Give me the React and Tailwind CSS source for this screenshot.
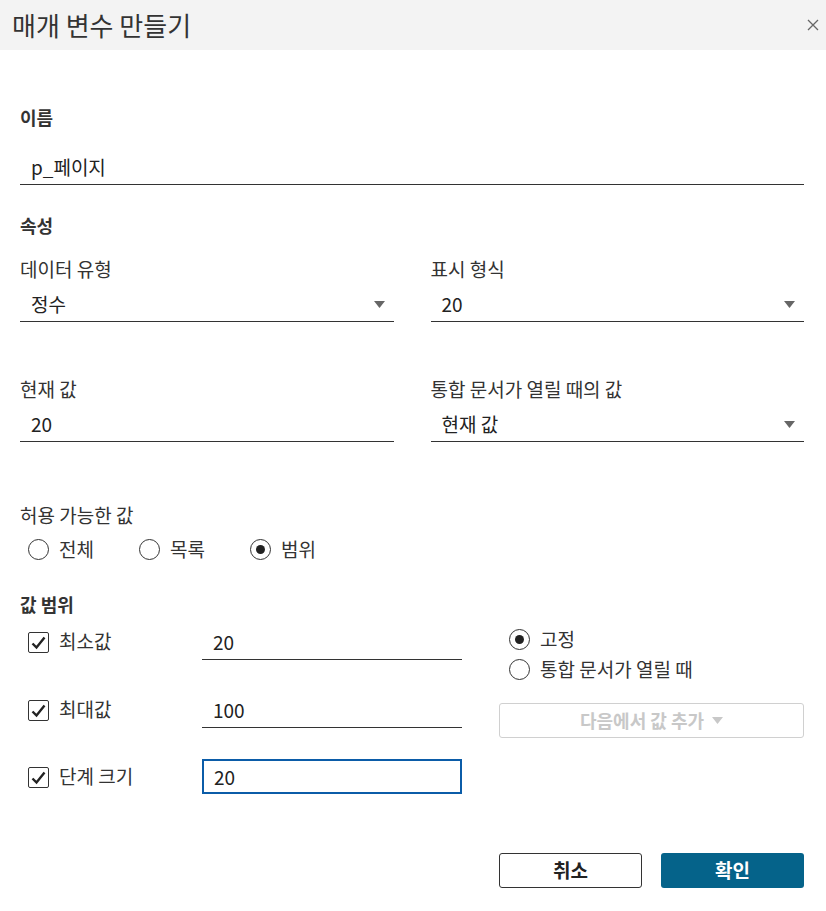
import React from "react";

const FONT = { fontFamily: '"Noto Sans CJK KR", "Noto Sans", sans-serif' };

function Arrow() {
  return (
    <svg width="11" height="7" viewBox="0 0 11 7" className="shrink-0">
      <path d="M0 0 L11 0 L5.5 7 Z" fill="#666" />
    </svg>
  );
}

function Radio({ checked, label }) {
  return (
    <div className="flex items-center gap-[10px]">
      <span className="w-[21px] h-[21px] rounded-full border border-[#333] flex items-center justify-center bg-white shrink-0">
        {checked && <span className="w-[9px] h-[9px] rounded-full bg-[#222]" />}
      </span>
      <span className="text-[19px] leading-[24px] text-[#333]">{label}</span>
    </div>
  );
}

function Check({ label }) {
  return (
    <div className="flex items-center gap-[10px] ml-2">
      <span className="w-[21px] h-[21px] rounded-[2px] border border-[#333] flex items-center justify-center bg-white shrink-0">
        <svg width="15" height="14" viewBox="0 0 15 14">
          <path d="M1.5 7.5 L5.5 11.5 L13.5 1.5" fill="none" stroke="#222" strokeWidth="2.4" />
        </svg>
      </span>
      <span className="text-[19px] leading-[24px] text-[#333] -mt-[4px]">{label}</span>
    </div>
  );
}

function UField({ value, select }) {
  return (
    <div className="h-[35px] border-b-[1.5px] border-[#333] flex items-center justify-between pl-[11px] pr-[9px]">
      <span className="text-[19px] text-[#222] leading-[24px]">{value}</span>
      {select && <Arrow />}
    </div>
  );
}

export default function App() {
  return (
    <div style={FONT} className="w-[826px] h-[911px] bg-white text-[#333] overflow-hidden">
      <div className="h-[50px] bg-[#f3f3f3] flex items-center justify-between pl-[12px] pr-[7px]">
        <span className="text-[26px] text-[#333] leading-none">매개 변수 만들기</span>
        <svg width="12" height="12" viewBox="0 0 12 12">
          <path d="M1 1 L11 11 M11 1 L1 11" stroke="#666" strokeWidth="1.3" />
        </svg>
      </div>

      <div className="pl-[20px] pr-[22px]">
        <div className="mt-[55px] h-[24px] flex items-center text-[18px] font-bold">이름</div>
        <div className="mt-[21px]">
          <UField value="p_페이지" />
        </div>

        <div className="mt-[28px] h-[24px] flex items-center text-[18px] font-bold">속성</div>

        <div className="grid grid-cols-2 gap-x-[37px] mt-[20px]">
          <div>
            <div className="h-[24px] flex items-center text-[19px]">데이터 유형</div>
            <div className="mt-[6px]"><UField value="정수" select /></div>
          </div>
          <div>
            <div className="h-[24px] flex items-center text-[19px]">표시 형식</div>
            <div className="mt-[6px]"><UField value="20" select /></div>
          </div>
          <div className="mt-[55px]">
            <div className="h-[24px] flex items-center text-[19px]">현재 값</div>
            <div className="mt-[6px]"><UField value="20" /></div>
          </div>
          <div className="mt-[55px]">
            <div className="h-[24px] flex items-center text-[19px]">통합 문서가 열릴 때의 값</div>
            <div className="mt-[6px]"><UField value="현재 값" select /></div>
          </div>
        </div>

        <div className="mt-[61px] h-[24px] flex items-center text-[19px]">허용 가능한 값</div>
        <div className="mt-[10px] flex items-center ml-2 gap-[31px]">
          <div className="w-[80px]"><Radio label="전체" /></div>
          <div className="w-[80px]"><Radio label="목록" /></div>
          <Radio checked label="범위" />
        </div>

        <div className="mt-[31px] h-[24px] flex items-center text-[18px] font-bold">값 범위</div>

        <div className="mt-[9px] flex">
          <div className="w-[442px] flex flex-col gap-[33px]">
            <div className="flex items-center">
              <div className="w-[182px]"><Check label="최소값" /></div>
              <div className="w-[260px]"><UField value="20" /></div>
            </div>
            <div className="flex items-center">
              <div className="w-[182px]"><Check label="최대값" /></div>
              <div className="w-[260px]"><UField value="100" /></div>
            </div>
            <div className="flex items-center">
              <div className="w-[182px]"><Check label="단계 크기" /></div>
              <div className="w-[260px] h-[35px] -mt-[2px] border-[2.5px] border-[#0b5ca8] flex items-center pl-[10px]">
                <span className="text-[19px] text-[#222] leading-[24px]">20</span>
              </div>
            </div>
          </div>
          <div className="ml-[37px] flex-1">
            <div className="ml-[10px] mt-[2px] flex flex-col gap-[6px]">
              <Radio checked label="고정" />
              <Radio label="통합 문서가 열릴 때" />
            </div>
            <div className="mt-[22px] h-[35px] border border-[#d0d0d0] rounded-[3px] flex items-center justify-center gap-[8px]">
              <span className="text-[18px] font-bold text-[#c8c8c8]">다음에서 값 추가</span>
              <svg width="11" height="7" viewBox="0 0 11 7"><path d="M0 0 L11 0 L5.5 7 Z" fill="#c8c8c8" /></svg>
            </div>
          </div>
        </div>

        <div className="mt-[59px] flex justify-end gap-[19px]">
          <button className="w-[143px] h-[35px] border border-[#333] rounded-[3px] bg-white text-[19px] font-bold text-[#222]">취소</button>
          <button className="w-[143px] h-[35px] rounded-[3px] bg-[#05638a] text-[19px] font-bold text-white">확인</button>
        </div>
      </div>
    </div>
  );
}
